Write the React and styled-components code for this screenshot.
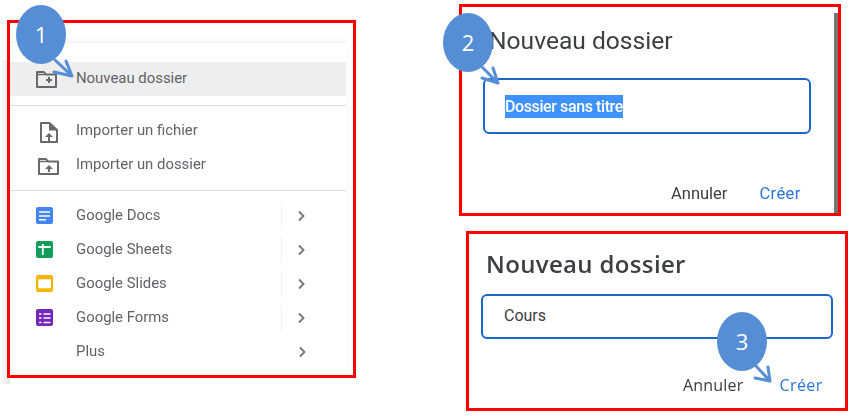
import React from 'react';
import styled, { createGlobalStyle } from 'styled-components';

const GlobalStyle = createGlobalStyle`
  html, body {
    margin: 0;
    padding: 0;
    background: #ffffff;
    font-family: Roboto, "Liberation Sans", sans-serif;
  }
`;

const Page = styled.div`
  position: relative;
  width: 855px;
  height: 416px;
  overflow: hidden;
  display: flex;
  align-items: flex-start;
  background: #fff;
`;

const RedFrame = styled.section`
  box-sizing: border-box;
  border: 3px solid #fe0000;
  background: #fff;
  width: ${(p) => p.$w}px;
  height: ${(p) => p.$h}px;
  position: relative;
`;

// Menu on the left
const MenuWrap = styled.div`
  margin: 20px 0 0 7px;
  position: relative;
  &::before {
    content: '';
    position: absolute;
    left: -7px;
    top: 40px;
    bottom: -6px;
    width: 10px;
    background: linear-gradient(to right, #ffffff, #e4e4e4);
  }
`;

const MenuFrame = styled(RedFrame)`
  padding: 19px 7px 0 0;
  background: transparent;
`;

const MenuCard = styled.div`
  border-top: 1px solid #f2f2f2;
  box-shadow: 0 -3px 5px rgba(0, 0, 0, 0.04);
  padding-top: 19px;
  height: 312px;
  background: #fff;
  filter: blur(0.35px);
`;

const MenuRow = styled.div`
  height: 34px;
  display: flex;
  align-items: center;
  background: ${(p) => (p.$active ? '#eeeeee' : 'transparent')};
  color: #5f6368;
  font-size: 14.9px;
  position: relative;
`;

const IconSlot = styled.span`
  width: 66px;
  height: 24px;
  flex: none;
  padding-left: 26px;
  box-sizing: border-box;
  svg {
    display: block;
    overflow: visible;
  }
`;

const RowLabel = styled.span`
  flex: 1;
  margin-top: -2px;
`;

const RowEnd = styled.span`
  width: 65px;
  height: 26px;
  flex: none;
  display: flex;
  align-items: center;
  padding-left: ${(p) => (p.$plain ? 16 : 15)}px;
  box-sizing: border-box;
  border-left: ${(p) => (p.$plain ? '1px solid transparent' : '1px solid #f1f1f1')};
`;

const Divider = styled.hr`
  border: 0;
  height: 1px;
  background: #dfe0e4;
  margin: ${(p) => p.$m};
`;

// Dialogs on the right
const RightColumn = styled.div`
  margin-left: 103px;
  display: flex;
  flex-direction: column;
`;

const DialogOne = styled(RedFrame)`
  margin-top: 4px;
  padding: 18px 0 0 21px;
  &::after {
    content: '';
    position: absolute;
    top: 6px;
    right: 0;
    width: 4px;
    bottom: 0;
    background: #757575;
  }
`;

const DialogTwo = styled(RedFrame)`
  margin: 15px 0 0 7px;
  padding: 14px 0 0 12px;
`;

const DialogTitle = styled.h2`
  margin: 0;
  color: #3c4043;
  font-family: ${(p) => (p.$wide ? '"Open Sans", sans-serif' : 'Roboto, sans-serif')};
  font-size: ${(p) => (p.$wide ? '24px' : '24.6px')};
  font-weight: ${(p) => (p.$wide ? 600 : 400)};
  letter-spacing: ${(p) => (p.$wide ? '0.35px' : '0')};
  line-height: 32px;
  padding-left: ${(p) => (p.$wide ? '5px' : '6px')};
  white-space: nowrap;
  filter: blur(0.35px);
`;

const TextBox = styled.div`
  box-sizing: border-box;
  width: ${(p) => p.$w}px;
  height: ${(p) => p.$h}px;
  margin-top: ${(p) => p.$mt}px;
  border: 2px solid #1a66cc;
  border-radius: 6px;
  display: flex;
  align-items: center;
  padding-left: ${(p) => p.$pad}px;
  padding-bottom: ${(p) => p.$pb || 0}px;
  font-size: ${(p) => p.$fs}px;
  color: #3c4043;
`;

const Selected = styled.span`
  background: #3f92fb;
  color: #fff;
  line-height: 23px;
  font-size: 16px;
  letter-spacing: -0.4px;
  font-weight: 500;
  white-space: nowrap;
  filter: blur(0.3px);
`;

const DialogActions = styled.div`
  display: flex;
  margin-top: ${(p) => p.$mt}px;
  padding-left: ${(p) => p.$pad}px;
  gap: ${(p) => p.$gap}px;
  font-size: ${(p) => p.$fs}px;
  font-family: ${(p) => (p.$wide ? '"Open Sans", sans-serif' : 'Roboto, sans-serif')};
  letter-spacing: ${(p) => (p.$wide ? '0.2px' : '0')};
  filter: blur(0.3px);
`;

const Cancel = styled.span`
  color: #3c4043;
`;

const Create = styled.span`
  color: #2a75dc;
  letter-spacing: 0.4px;
`;

// Numbered callouts lying over the screenshots
const Callout = styled.div`
  position: absolute;
  left: ${(p) => p.$x}px;
  top: ${(p) => p.$y}px;
  width: 70px;
  height: 85px;
`;

const Bubble = styled.div`
  position: relative;
  width: 50px;
  height: 59px;
  border-radius: 50%;
  background: #558ed5;
  color: #fff;
  font-family: "Open Sans", sans-serif;
  font-size: 22px;
  display: flex;
  align-items: center;
  justify-content: center;
  padding-bottom: 2px;
  box-sizing: border-box;
`;

const ArrowSvg = styled.svg`
  position: absolute;
  left: 0;
  top: 0;
  pointer-events: none;
`;

const Arrow = ({ d }) => (
  <ArrowSvg width="70" height="85" fill="none" stroke="#558ed5" strokeWidth="3" strokeLinecap="round" strokeLinejoin="round">
    <path d={d} />
  </ArrowSvg>
);

const Icon = ({ children }) => (
  <svg width="24" height="24" viewBox="0 0 24 24" fill="none">{children}</svg>
);

const GREY = '#666a6e';

const FolderPlus = () => (
  <Icon>
    <path d="M1 5h7l2 2.5h10v12.5H1z" stroke={GREY} strokeWidth="2" strokeLinejoin="round" />
    <path d="M1 7.5h9" stroke={GREY} strokeWidth="1.5" />
    <path d="M13 10v6M10 13h6" stroke={GREY} strokeWidth="2" />
  </Icon>
);

const FileUp = () => (
  <Icon>
    <path d="M5 4h8.5l7.5 7v12H5z" stroke={GREY} strokeWidth="2" strokeLinejoin="round" />
    <path d="M13 4v7.5h8z" fill={GREY} />
    <path d="M13 22v-5" stroke={GREY} strokeWidth="2" />
    <path d="M9 18l4-4 4 4z" fill={GREY} />
  </Icon>
);

const FolderUp = () => (
  <Icon>
    <path d="M3 6h7l2 2.5h10V21H3z" stroke={GREY} strokeWidth="2" strokeLinejoin="round" />
    <path d="M3 8.5h9" stroke={GREY} strokeWidth="1.5" />
    <path d="M13 19v-4.5" stroke={GREY} strokeWidth="2" />
    <path d="M9 16l4-4 4 4z" fill={GREY} />
  </Icon>
);

const Docs = () => (
  <Icon>
    <rect x="0" y="3" width="17" height="17" rx="2" fill="#4285f4" />
    <path d="M3 8h11M3 12h11M3 15.7h7" stroke="#fff" strokeWidth="1.4" />
  </Icon>
);

const Sheets = () => (
  <Icon>
    <rect x="0" y="3" width="17" height="17" rx="2" fill="#0f9d58" />
    <path d="M2.3 9h12.4M6.8 6v11" stroke="#fff" strokeWidth="1.8" />
  </Icon>
);

const Slides = () => (
  <Icon>
    <rect x="0" y="3" width="17" height="17" rx="2" fill="#f4b400" />
    <rect x="2.3" y="7.3" width="12.7" height="9" fill="#fff" />
  </Icon>
);

const Forms = () => (
  <Icon>
    <rect x="0" y="3" width="17" height="17" rx="2" fill="#7627bb" />
    <path d="M7.5 8h7M7.5 12h7M7.5 16.5h7M3 8h2.5M3 12h2.5M3 16.5h2.5" stroke="#fff" strokeWidth="1.5" />
  </Icon>
);

const Chevron = () => (
  <svg width="10" height="12" viewBox="0 0 10 12" fill="none">
    <path d="M2 1.5L6.5 6 2 10.5" stroke="#70757a" strokeWidth="1.8" />
  </svg>
);

const appRows = [
  { label: 'Google Docs', icon: <Docs /> },
  { label: 'Google Sheets', icon: <Sheets /> },
  { label: 'Google Slides', icon: <Slides /> },
  { label: 'Google Forms', icon: <Forms /> },
  { label: 'Plus', icon: null, plain: true },
];

const App = () => {
  return (
    <Page>
      <GlobalStyle />
      <MenuWrap>
        <MenuFrame $w={349} $h={358}>
          <MenuCard>
            <MenuRow $active>
              <IconSlot><FolderPlus /></IconSlot>
              <RowLabel>Nouveau dossier</RowLabel>
            </MenuRow>
            <Divider $m="9px 0 8px" />
            <MenuRow>
              <IconSlot><FileUp /></IconSlot>
              <RowLabel>Importer un fichier</RowLabel>
            </MenuRow>
            <MenuRow>
              <IconSlot><FolderUp /></IconSlot>
              <RowLabel>Importer un dossier</RowLabel>
            </MenuRow>
            <Divider $m="8px 0 8px" />
            {appRows.map((row) => (
              <MenuRow key={row.label}>
                <IconSlot>{row.icon}</IconSlot>
                <RowLabel>{row.label}</RowLabel>
                <RowEnd $plain={row.plain}><Chevron /></RowEnd>
              </MenuRow>
            ))}
          </MenuCard>
        </MenuFrame>
      </MenuWrap>

      <RightColumn>
        <DialogOne $w={382} $h={212}>
          <DialogTitle>Nouveau dossier</DialogTitle>
          <TextBox $w={328} $h={56} $mt={21} $pad={20} $fs={17}>
            <Selected>Dossier sans titre</Selected>
          </TextBox>
          <DialogActions $mt={50} $pad={188} $gap={32} $fs={16.5}>
            <Cancel>Annuler</Cancel>
            <Create>Créer</Create>
          </DialogActions>
        </DialogOne>

        <DialogTwo $w={382} $h={180}>
          <DialogTitle $wide>Nouveau dossier</DialogTitle>
          <TextBox $w={352} $h={45} $mt={14} $pad={21} $pb={3} $fs={16}>Cours</TextBox>
          <DialogActions $wide $mt={35} $pad={202} $gap={36} $fs={16}>
            <Cancel>Annuler</Cancel>
            <Create>Créer</Create>
          </DialogActions>
        </DialogTwo>
      </RightColumn>

      <Callout $x={16} $y={5}>
        <Arrow d="M39 55L56 71M50 56L56 71L38 67" />
        <Bubble>1</Bubble>
      </Callout>
      <Callout $x={443} $y={13}>
        <Arrow d="M39 54L55 70M50 55L55 70L39 65" />
        <Bubble>2</Bubble>
      </Callout>
      <Callout $x={717} $y={312}>
        <Arrow d="M38 53L53 69M51 55L53 69L38 66" />
        <Bubble>3</Bubble>
      </Callout>
    </Page>
  );
};

export default App;
